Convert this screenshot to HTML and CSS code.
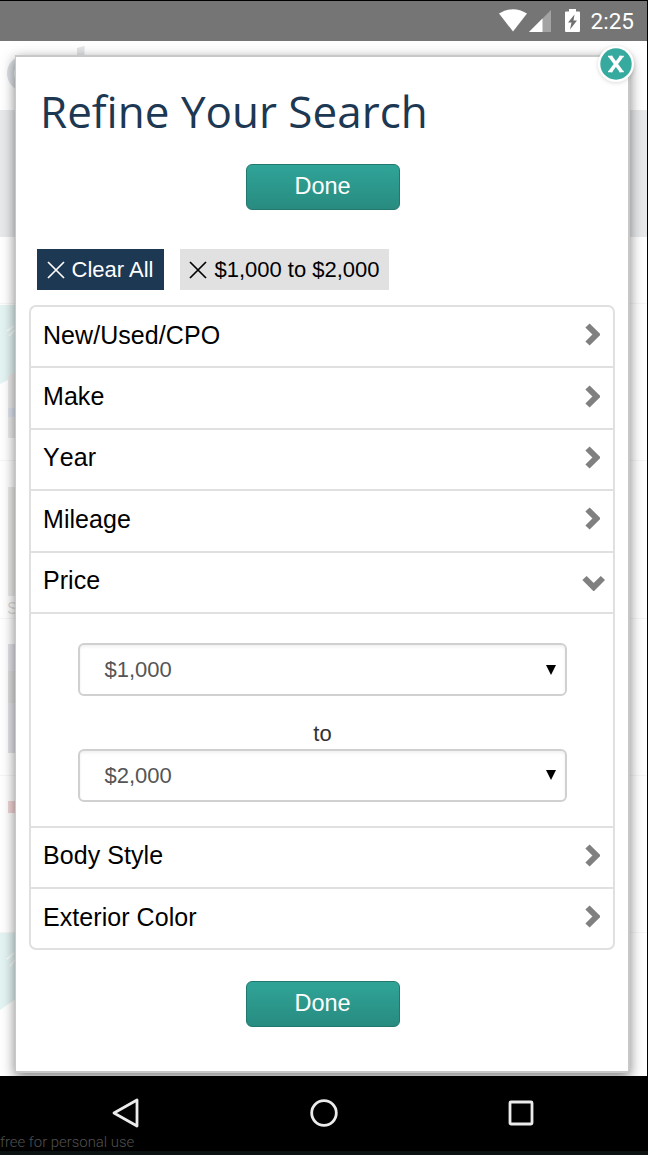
FILE: index.html
```
<!DOCTYPE html>
<html lang="en">
<head>
  <meta charset="UTF-8">
  <meta name="viewport" content="width=device-width, initial-scale=1.0">
  <title>Refine Your Search</title>
  <link rel="stylesheet" href="styles.css">
</head>
<body>
  <div class="screen">
    <header class="status-bar">
      <svg class="wifi" width="28" height="23" viewBox="0 0 28 23"><path d="M0 4.500Q14-4.200 28 4.500L14 22.500z" fill="#fff"/></svg>
      <svg class="signal" width="22" height="22" viewBox="0 0 22 22"><path d="M0 22L22 0V22z" fill="#a3a3a3"/><path d="M0 22L13.500 8.500V22z" fill="#fff"/></svg>
      <svg class="battery" width="15" height="24" viewBox="0 0 15 24"><path d="M1 2.500H4V0H11V2.500H14Q15 2.500 15 3.500V22Q15 23 14 23H1Q0 23 0 22V3.500Q0 2.500 1 2.500z" fill="#fff"/><path d="M9.500 5.500L3 13.500H6.500L5 20.500L12 11.500H8.500z" fill="#707070"/></svg>
      <span class="time">2:25</span>
    </header>

    <main class="page">
      <!-- faded results page under the dialog -->
      <svg class="backdrop" width="647" height="1035" viewBox="0 41 647 1035">
        <path d="M0 110H647V237H0z" fill="#e7e9eb"/>
        <path d="M77 48L84.500 46V60H77z" fill="#e3e4e5"/>
        <circle cx="25" cy="73.500" r="14.500" fill="none" stroke="#dce1e5" stroke-width="7"/>
        <path d="M0 305H24V372L0 384z" fill="#e3f4f2"/>
        <path d="M8 376L16 372V438H8z" fill="#ececed"/>
        <path d="M8 408H16V417H8z" fill="#dfe4ef"/>
        <path d="M8 487H16V596H8z" fill="#ececea"/>
        <path d="M8 644H16V753H8z" fill="#e3e3ea"/>
        <path d="M8 671H16V703H8z" fill="#dfdfe0"/>
        <path d="M8 801H16V813H8z" fill="#f2d5d7"/>
        <path d="M0 933H24V993L0 1010z" fill="#e3f4f2"/>
        <path d="M7 331L14 326M9 336L15 330M7 959L14 953M10 966L15 960" stroke="#fff" stroke-width="1.500"/>
        <path d="M0 303.500H647M0 460.500H647M0 618.500H647M0 775.500H647M0 932.500H647" stroke="#f6f6f6"/>
        <text x="7" y="614" class="backdrop-text">S</text>
      </svg>

      <section class="modal">
        <button class="close" aria-label="Close">
          <svg width="36" height="36" viewBox="0 0 36 36"><circle cx="18" cy="18" r="15.700" fill="#36aa9e"/><path d="M12.300 10.500L23.500 25.500M23.500 10.500L12.300 25.500" stroke="#fff" stroke-width="3.600"/><path d="M10 10.500H14.500M21.300 10.500H25.800M10 25.500H14.500M21.300 25.500H25.800" stroke="#fff" stroke-width="1.400"/></svg>
        </button>
        <h1 class="title">Refine Your Search</h1>
        <button class="done">Done</button>

        <div class="chips">
          <span class="chip chip-clear"><svg width="18" height="18" viewBox="0 0 18 18"><path d="M1 1L17 17M17 1L1 17"/></svg>Clear All</span>
          <span class="chip"><svg width="18" height="18" viewBox="0 0 18 18"><path d="M1 1L17 17M17 1L1 17"/></svg>$1,000 to $2,000</span>
        </div>

        <div class="filters">
          <div class="row">New/Used/CPO<svg class="arrow" width="15" height="24" viewBox="0 0 15 24"><path d="M2.500 2.500L11.500 11.500L2.500 20.500"/></svg></div>
          <div class="row">Make<svg class="arrow" width="15" height="24" viewBox="0 0 15 24"><path d="M2.500 2.500L11.500 11.500L2.500 20.500"/></svg></div>
          <div class="row">Year<svg class="arrow" width="15" height="24" viewBox="0 0 15 24"><path d="M2.500 2.500L11.500 11.500L2.500 20.500"/></svg></div>
          <div class="row">Mileage<svg class="arrow" width="15" height="24" viewBox="0 0 15 24"><path d="M2.500 2.500L11.500 11.500L2.500 20.500"/></svg></div>
          <div class="row open">Price<svg class="arrow" width="24" height="16" viewBox="0 0 24 16"><path d="M2.500 3L11.700 12.200L20.900 3"/></svg></div>
          <div class="price-panel">
            <div class="select">$1,000<svg width="10" height="10" viewBox="0 0 10 10"><path d="M0 0H10L5 10z"/></svg></div>
            <div class="to">to</div>
            <div class="select">$2,000<svg width="10" height="10" viewBox="0 0 10 10"><path d="M0 0H10L5 10z"/></svg></div>
          </div>
          <div class="row">Body Style<svg class="arrow" width="15" height="24" viewBox="0 0 15 24"><path d="M2.500 2.500L11.500 11.500L2.500 20.500"/></svg></div>
          <div class="row">Exterior Color<svg class="arrow" width="15" height="24" viewBox="0 0 15 24"><path d="M2.500 2.500L11.500 11.500L2.500 20.500"/></svg></div>
        </div>

        <button class="done">Done</button>
      </section>
    </main>

    <footer class="nav-bar">
      <svg width="30" height="30" viewBox="0 0 30 30"><path d="M26 2V28L3 15z"/></svg>
      <svg width="30" height="30" viewBox="0 0 30 30"><circle cx="15" cy="15" r="12.300"/></svg>
      <svg width="30" height="30" viewBox="0 0 30 30"><rect x="4" y="4" width="22" height="22" rx="1"/></svg>
      <span class="watermark">free for personal use</span>
    </footer>
  </div>
</body>
</html>
```

FILE: styles.css
```
* {
  box-sizing: border-box;
}

body {
  margin: 0;
  background-color: #000;
  font-family: "Liberation Sans", Arial, sans-serif;
  color: #000;
}

svg {
  display: block;
  flex: none;
}

button {
  font-family: inherit;
  cursor: pointer;
}

.screen {
  width: 648px;
  height: 1155px;
  display: flex;
  flex-direction: column;
  overflow: hidden;
}

/* status bar */
.status-bar {
  height: 41px;
  border-top: 1px solid #000;
  border-right: 1px solid #000;
  background-color: #757575;
  display: flex;
  align-items: flex-start;
  justify-content: flex-end;
  padding: 8px 13px 0 0;
}

.signal {
  margin: 1px 14px 0 2px;
}

.battery {
  margin-right: 11px;
}

.time {
  font-family: Roboto, sans-serif;
  font-size: 22.5px;
  line-height: 25px;
  color: #fff;
}

.page {
  position: relative;
  height: 1035px;
  border-right: 1px solid #000;
  background-color: #fff;
  padding: 14px 17px 0 15px;
  overflow: hidden;
}

.backdrop {
  position: absolute;
  top: 0;
  left: 0;
}

.backdrop-text {
  font-size: 16px;
  fill: #ddd;
}

/* dialog */
.modal {
  position: relative;
  height: 1018px;
  background-color: #fff;
  border: 2px solid #c8c8c8;
  border-left-width: 1px;
  box-shadow: 0 4px 12px rgba(0, 0, 0, 0.5);
  padding: 24px 13px 0 13px;
  display: flex;
  flex-direction: column;
  align-items: center;
}

.close {
  position: absolute;
  top: -11px;
  right: -6px;
  width: 36px;
  height: 36px;
  padding: 0;
  border: none;
  border-radius: 50%;
  background-color: #fff;
  box-shadow: 0 1px 4px rgba(0, 0, 0, 0.15);
}

.title {
  align-self: flex-start;
  margin: 0 0 23px 11px;
  font-family: "Open Sans", sans-serif;
  font-weight: 400;
  font-size: 44px;
  line-height: 60px;
  color: #1d3853;
}

.done {
  flex: none;
  width: 154px;
  height: 46px;
  margin-left: 2px;
  padding: 0 1px 2px 0;
  border: 1px solid #22786f;
  border-radius: 6px;
  background: linear-gradient(#30a498, #288b80);
  font-size: 23.5px;
  color: #fff;
}

.chips {
  align-self: flex-start;
  display: flex;
  gap: 16px;
  margin: 39px 0 16px 8px;
}

.chip {
  height: 41px;
  padding: 0 9.5px;
  background-color: #e1e1e1;
  display: flex;
  align-items: center;
  gap: 7px;
  font-size: 22px;
  white-space: nowrap;
}

.chip svg {
  margin-top: 1px;
  fill: none;
  stroke: #000;
  stroke-width: 1.7;
}

.chip-clear {
  padding-right: 10.5px;
  background-color: #1d3853;
  color: #fff;
}

.chip-clear svg {
  stroke: #fff;
}

.filters {
  width: 586px;
  margin: -1px 0 31px;
  border: 2px solid #e0e0e0;
  border-radius: 7px;
}

.row {
  height: 61.4px;
  border-bottom: 2px solid #e0e0e0;
  padding: 0 13px 3px 12px;
  display: flex;
  align-items: center;
  justify-content: space-between;
  font-size: 25px;
  font-kerning: none;
  letter-spacing: 0.06px;
}

.row:last-child {
  border-bottom: none;
  height: 59.3px;
}

.row.open {
  padding-right: 7px;
}

.arrow {
  fill: none;
  stroke: #808080;
  stroke-width: 6;
}

.open .arrow {
  margin-top: 4px;
}

.price-panel {
  height: 213.6px;
  padding: 29.5px 46px 0 47px;
  border-bottom: 2px solid #e0e0e0;
  font-size: 22px;
}

.select {
  height: 53px;
  padding: 1px 9px 0 24.5px;
  border: 2px solid #d0d0d0;
  border-radius: 6px;
  box-shadow: inset 0 2px 3px rgba(0, 0, 0, 0.06);
  display: flex;
  align-items: center;
  justify-content: space-between;
  color: #555;
}

.select svg {
  margin-bottom: 1px;
  fill: #000;
}

.to {
  height: 52.5px;
  padding-top: 24.5px;
  line-height: 26px;
  text-align: center;
  color: #333;
}

/* android buttons */
.nav-bar {
  position: relative;
  height: 79px;
  border-bottom: 4px solid #0c1112;
  padding: 0 112px 1px 111px;
  display: flex;
  align-items: center;
  justify-content: space-between;
}

.nav-bar svg {
  fill: none;
  stroke: #ebebeb;
  stroke-width: 2.8;
  stroke-linejoin: round;
}

.watermark {
  position: absolute;
  left: 0;
  bottom: 0;
  font-family: Roboto, sans-serif;
  font-weight: 300;
  font-size: 14.9px;
  line-height: 18px;
  color: #505050;
}
```
